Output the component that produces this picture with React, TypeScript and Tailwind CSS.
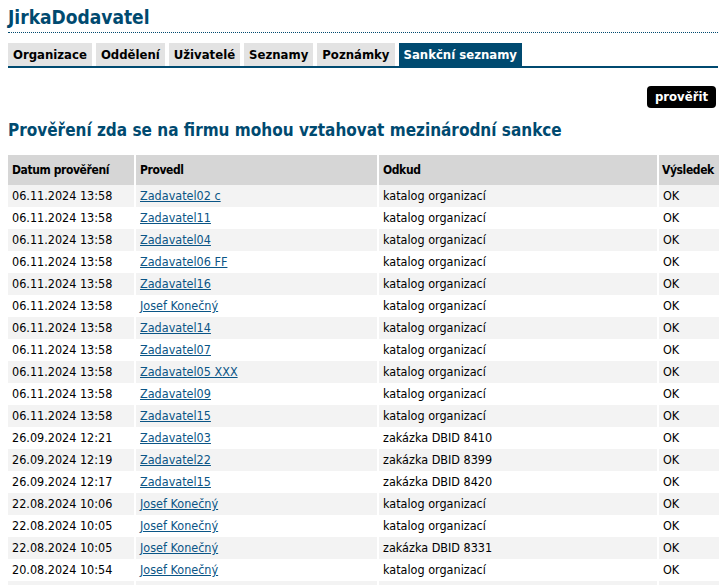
const rows: [string, string, string][] = [
  ["06.11.2024 13:58", "Zadavatel02 c", "katalog organizací"],
  ["06.11.2024 13:58", "Zadavatel11", "katalog organizací"],
  ["06.11.2024 13:58", "Zadavatel04", "katalog organizací"],
  ["06.11.2024 13:58", "Zadavatel06 FF", "katalog organizací"],
  ["06.11.2024 13:58", "Zadavatel16", "katalog organizací"],
  ["06.11.2024 13:58", "Josef Konečný", "katalog organizací"],
  ["06.11.2024 13:58", "Zadavatel14", "katalog organizací"],
  ["06.11.2024 13:58", "Zadavatel07", "katalog organizací"],
  ["06.11.2024 13:58", "Zadavatel05 XXX", "katalog organizací"],
  ["06.11.2024 13:58", "Zadavatel09", "katalog organizací"],
  ["06.11.2024 13:58", "Zadavatel15", "katalog organizací"],
  ["26.09.2024 12:21", "Zadavatel03", "zakázka DBID 8410"],
  ["26.09.2024 12:19", "Zadavatel22", "zakázka DBID 8399"],
  ["26.09.2024 12:17", "Zadavatel15", "zakázka DBID 8420"],
  ["22.08.2024 10:06", "Josef Konečný", "katalog organizací"],
  ["22.08.2024 10:05", "Josef Konečný", "katalog organizací"],
  ["22.08.2024 10:05", "Josef Konečný", "zakázka DBID 8331"],
  ["20.08.2024 10:54", "Josef Konečný", "katalog organizací"],
];

const tabs = ["Organizace", "Oddělení", "Uživatelé", "Seznamy", "Poznámky", "Sankční seznamy"];

export default function App() {
  return (
    <div className="min-h-screen bg-white px-2 pt-[5px] text-[12.5px] text-black font-['DejaVu_Sans_Condensed','DejaVu_Sans',sans-serif]">
      <h1 className="text-[19px] font-bold leading-[24px] text-[#004a70]">JirkaDodavatel</h1>
      <div className="mt-[3px] border-b border-dotted border-[#004a70]" />

      <nav className="mt-[10px] flex gap-1 border-b-2 border-[#004a70] text-[13px]">
        {tabs.map((t, i) => (
          <div
            key={t}
            className={
              i === tabs.length - 1
                ? "bg-[#004a70] px-[5px] py-[3px] font-bold leading-[17px] text-white"
                : "bg-[#e3e3e3] px-[5px] py-[3px] font-bold leading-[17px] text-black"
            }
          >
            {t}
          </div>
        ))}
      </nav>

      <div className="mt-[18px] flex justify-end pr-[2px]">
        <button className="rounded-[4px] bg-black px-2 py-[2px] text-[13px] font-bold leading-[18px] text-white">
          prověřit
        </button>
      </div>

      <h2 className="mt-[11px] text-[17px] font-bold leading-[22px] text-[#004a70]">
        Prověření zda se na firmu mohou vztahovat mezinárodní sankce
      </h2>

      <div className="mt-[14px] grid w-[711px] grid-cols-[126px_241px_278px_minmax(0,1fr)] gap-x-[2px]">
        <div className="bg-[#d6d6d6] px-1 py-[6px] text-[12px] font-bold leading-[18px] tracking-[-0.4px]">Datum prověření</div>
        <div className="bg-[#d6d6d6] px-1 py-[6px] text-[12px] font-bold leading-[18px] tracking-[-0.4px]">Provedl</div>
        <div className="bg-[#d6d6d6] px-1 py-[6px] text-[12px] font-bold leading-[18px] tracking-[-0.4px]">Odkud</div>
        <div className="whitespace-nowrap bg-[#d6d6d6] pl-[3px] py-[6px] text-[12px] font-bold leading-[18px] tracking-[-0.4px]">Výsledek</div>
        {rows.map(([d, who, from], i) => {
          const bg = i % 2 === 0 ? "bg-[#f3f3f3]" : "bg-white";
          return [
            <div key={`d${i}`} className={`${bg} px-1 leading-[22px]`}>{d}</div>,
            <div key={`w${i}`} className={`${bg} px-1 leading-[22px]`}>
              <a href="#" className="text-[#0a5586] underline">{who}</a>
            </div>,
            <div key={`f${i}`} className={`${bg} px-1 leading-[22px]`}>{from}</div>,
            <div key={`r${i}`} className={`${bg} px-1 leading-[22px]`}>OK</div>,
          ];
        })}
        <div className="h-[22px] bg-[#f3f3f3]" />
        <div className="h-[22px] bg-[#f3f3f3]" />
        <div className="h-[22px] bg-[#f3f3f3]" />
        <div className="h-[22px] bg-[#f3f3f3]" />
      </div>
    </div>
  );
}
